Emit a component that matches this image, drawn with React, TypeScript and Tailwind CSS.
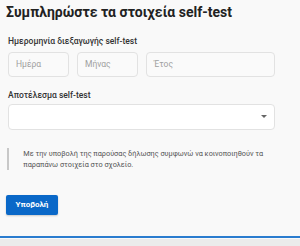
import React from 'react';

export default function App() {
  return (
    <div className="w-[300px] h-[246px] overflow-hidden bg-[#f9f9f9] flex flex-col font-['Roboto',sans-serif] text-[#222]">
      <div className="flex-1 px-[6px] pt-[2px]">
        <h1 className="text-[14px] leading-[20px] font-bold text-[#222]">Συμπληρώστε τα στοιχεία self-test</h1>

        <div className="pl-[2px] pr-[19px]">
          <label className="block mt-[13px] text-[8.5px] leading-[12px] font-medium text-[#333]">Ημερομηνία διεξαγωγής self-test</label>
          <div className="mt-[5px] flex gap-[8px]">
            <div className="w-[61px] h-[25px] border border-[#e2e2e2] rounded-[4px] bg-[#fafafa] flex items-center px-[7px] text-[8.5px] text-[#a0a0a0]">Ημέρα</div>
            <div className="w-[61px] h-[25px] border border-[#e2e2e2] rounded-[4px] bg-[#fafafa] flex items-center px-[7px] text-[8.5px] text-[#a0a0a0]">Μήνας</div>
            <div className="flex-1 h-[25px] border border-[#e2e2e2] rounded-[4px] bg-[#fafafa] flex items-center px-[7px] text-[8.5px] text-[#a0a0a0]">Έτος</div>
          </div>

          <label className="block mt-[12px] text-[8.5px] leading-[12px] font-medium text-[#333]">Αποτέλεσμα self-test</label>
          <div className="mt-[3px] h-[26px] border border-[#e2e2e2] rounded-[4px] bg-white flex items-center justify-end pr-[7px]">
            <svg width="6" height="4" viewBox="0 0 6 4"><path d="M0 0h6L3 3z" fill="#666" /></svg>
          </div>
        </div>

        <div className="mt-[18px] flex gap-[14px] pl-[1px]">
          <div className="w-[3px] h-[22px] bg-[#c8c8c8]" />
          <p className="text-[7.3px] leading-[11px] text-[#555]">
            Με την υποβολή της παρούσας δήλωσης συμφωνώ να κοινοποιηθούν τα παραπάνω στοιχεία στο σχολείο.
          </p>
        </div>

        <button className="mt-[25px] w-[52px] h-[20px] rounded-[2px] bg-[#0a68c8] text-white text-[8px] font-bold shadow-[0_1px_2px_rgba(0,0,0,0.2)]">Υποβολή</button>
      </div>
      <div className="h-[2px] bg-[#2a7ccf] mb-[1px]" />
      <div className="h-[7px] bg-[#ebebeb]" />
    </div>
  );
}
